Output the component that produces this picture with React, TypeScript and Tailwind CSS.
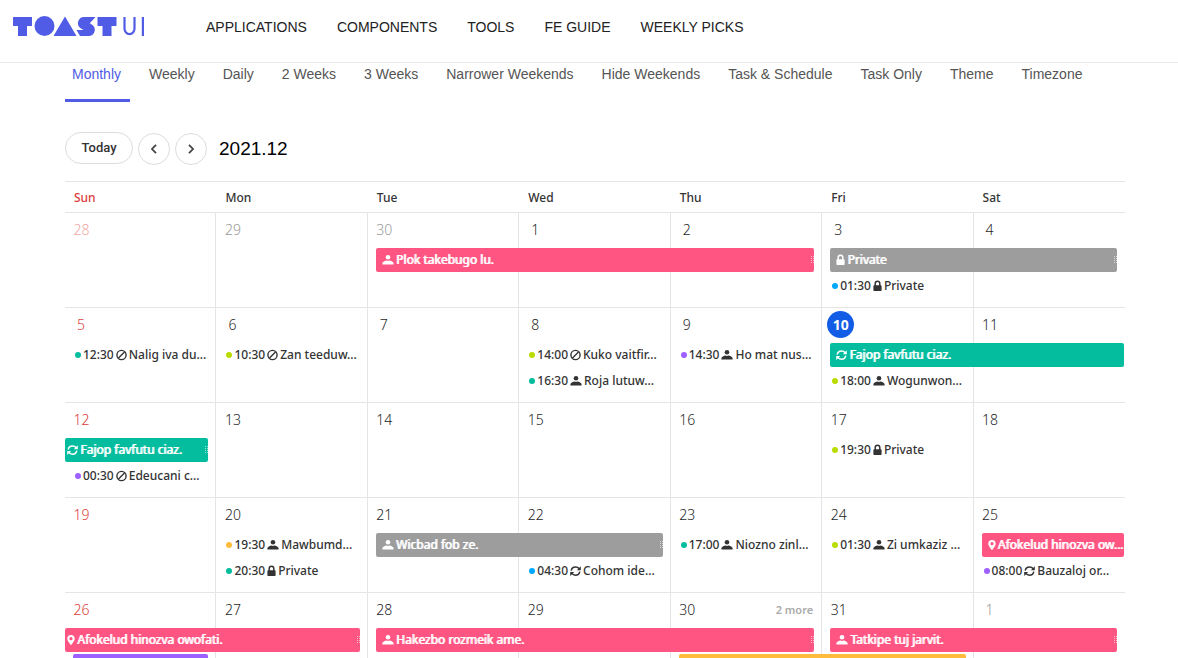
import React from 'react';

type Kind = 'user' | 'lock' | 'ban' | 'refresh' | 'pin';

interface Bar {
  title: string;
  icon?: Kind;
  color: string;
  place: string;
  start?: boolean;
  end?: boolean;
}

interface Timed {
  time: string;
  title: string;
  icon: Kind;
  dot: string;
  place: string;
}

interface Week {
  days: number[];
  bars: Bar[];
  timed: Timed[];
  more?: number;
}

const PINK = 'bg-[#ff5583]';
const GREEN = 'bg-[#03bd9e]';
const GREY = 'bg-[#9d9d9d]';

const weeks: Week[] = [
  {
    days: [28, 29, 30, 1, 2, 3, 4],
    bars: [
      { title: 'Plok takebugo lu.', icon: 'user', color: PINK, place: 'col-start-3 col-span-3 row-start-2', start: true, end: true },
      { title: 'Private', icon: 'lock', color: GREY, place: 'col-start-6 col-span-2 row-start-2', start: true, end: true },
    ],
    timed: [{ time: '01:30', title: 'Private', icon: 'lock', dot: 'bg-[#00a9ff]', place: 'col-start-6 row-start-3' }],
  },
  {
    days: [5, 6, 7, 8, 9, 10, 11],
    bars: [{ title: 'Fajop favfutu ciaz.', icon: 'refresh', color: GREEN, place: 'col-start-6 col-span-2 row-start-2', start: true }],
    timed: [
      { time: '12:30', title: 'Nalig iva du...', icon: 'ban', dot: 'bg-[#03bd9e]', place: 'col-start-1 row-start-2' },
      { time: '10:30', title: 'Zan teeduw...', icon: 'ban', dot: 'bg-[#bbdc00]', place: 'col-start-2 row-start-2' },
      { time: '14:00', title: 'Kuko vaitfir...', icon: 'ban', dot: 'bg-[#bbdc00]', place: 'col-start-4 row-start-2' },
      { time: '16:30', title: 'Roja lutuw...', icon: 'user', dot: 'bg-[#03bd9e]', place: 'col-start-4 row-start-3' },
      { time: '14:30', title: 'Ho mat nus...', icon: 'user', dot: 'bg-[#9e5fff]', place: 'col-start-5 row-start-2' },
      { time: '18:00', title: 'Wogunwon...', icon: 'user', dot: 'bg-[#bbdc00]', place: 'col-start-6 row-start-3' },
    ],
  },
  {
    days: [12, 13, 14, 15, 16, 17, 18],
    bars: [{ title: 'Fajop favfutu ciaz.', icon: 'refresh', color: GREEN, place: 'col-start-1 row-start-2', end: true }],
    timed: [
      { time: '00:30', title: 'Edeucani c...', icon: 'ban', dot: 'bg-[#9e5fff]', place: 'col-start-1 row-start-3' },
      { time: '19:30', title: 'Private', icon: 'lock', dot: 'bg-[#bbdc00]', place: 'col-start-6 row-start-2' },
    ],
  },
  {
    days: [19, 20, 21, 22, 23, 24, 25],
    bars: [
      { title: 'Wicbad fob ze.', icon: 'user', color: GREY, place: 'col-start-3 col-span-2 row-start-2', start: true, end: true },
      { title: 'Afokelud hinozva ow...', icon: 'pin', color: PINK, place: 'col-start-7 row-start-2', start: true },
    ],
    timed: [
      { time: '19:30', title: 'Mawbumd...', icon: 'user', dot: 'bg-[#ffbb3b]', place: 'col-start-2 row-start-2' },
      { time: '20:30', title: 'Private', icon: 'lock', dot: 'bg-[#03bd9e]', place: 'col-start-2 row-start-3' },
      { time: '04:30', title: 'Cohom ide...', icon: 'refresh', dot: 'bg-[#00a9ff]', place: 'col-start-4 row-start-3' },
      { time: '17:00', title: 'Niozno zinl...', icon: 'user', dot: 'bg-[#03bd9e]', place: 'col-start-5 row-start-2' },
      { time: '01:30', title: 'Zi umkaziz ...', icon: 'user', dot: 'bg-[#bbdc00]', place: 'col-start-6 row-start-2' },
      { time: '08:00', title: 'Bauzaloj or...', icon: 'refresh', dot: 'bg-[#9e5fff]', place: 'col-start-7 row-start-3' },
    ],
  },
  {
    days: [26, 27, 28, 29, 30, 31, 1],
    more: 4,
    bars: [
      { title: 'Afokelud hinozva owofati.', icon: 'pin', color: PINK, place: 'col-start-1 col-span-2 row-start-2', end: true },
      { title: 'Hakezbo rozmeik ame.', icon: 'user', color: PINK, place: 'col-start-3 col-span-3 row-start-2', start: true, end: true },
      { title: 'Tatkipe tuj jarvit.', icon: 'user', color: PINK, place: 'col-start-6 col-span-2 row-start-2', start: true, end: true },
      { title: '', color: 'bg-[#9e5fff]', place: 'col-start-1 row-start-3', start: true, end: true },
      { title: '', color: 'bg-[#ffbb3b]', place: 'col-start-5 col-span-2 row-start-3', start: true, end: true },
    ],
    timed: [],
  },
];

const columns = ['col-start-1', 'col-start-2', 'col-start-3', 'col-start-4', 'col-start-5', 'col-start-6', 'col-start-7'];
const dayNames = ['Sun', 'Mon', 'Tue', 'Wed', 'Thu', 'Fri', 'Sat'];
const menu = ['APPLICATIONS', 'COMPONENTS', 'TOOLS', 'FE GUIDE', 'WEEKLY PICKS'];
const tabs = ['Monthly', 'Weekly', 'Daily', '2 Weeks', '3 Weeks', 'Narrower Weekends', 'Hide Weekends', 'Task & Schedule', 'Task Only', 'Theme', 'Timezone'];

function Icon({ kind }: { kind: Kind }) {
  switch (kind) {
    case 'user':
      return (
        <svg viewBox="0 0 12 12" className="mr-0.5 h-3 w-3 shrink-0" fill="currentColor">
          <circle cx="6" cy="3.2" r="2.3" />
          <path d="M0.4 10.6V9.3C0.4 7.7 3 6.8 4.6 6.5L6 7.1L7.4 6.5C9 6.8 11.6 7.7 11.6 9.3V10.6Z" />
        </svg>
      );
    case 'lock':
      return (
        <svg viewBox="0 0 9 12" className="mr-0.5 h-3 w-[9px] shrink-0">
          <path d="M2.2 6V3.6a2.3 2.3 0 0 1 4.6 0V6" fill="none" stroke="currentColor" strokeWidth="1.5" />
          <rect x="0.4" y="5.2" width="8.2" height="5.8" rx="0.8" fill="currentColor" />
        </svg>
      );
    case 'ban':
      return (
        <svg viewBox="0 0 11 12" className="mr-0.5 h-3 w-[11px] shrink-0" fill="none" stroke="currentColor" strokeWidth="1.4">
          <circle cx="5.5" cy="6" r="4.6" />
          <path d="M2.3 9.2L8.7 2.8" />
        </svg>
      );
    case 'refresh':
      return (
        <svg viewBox="0 0 11 12" className="mr-0.5 h-3 w-[11px] shrink-0" fill="none" stroke="currentColor" strokeWidth="1.5">
          <path d="M1.2 5.6C1.6 3.4 3.4 2 5.6 2C7.1 2 8.4 2.7 9.2 3.8" />
          <path d="M9.8 6.6C9.4 8.8 7.6 10.2 5.4 10.2C3.9 10.2 2.6 9.5 1.8 8.4" />
          <path d="M10.8 1.2V5.2H6.8Z M0.2 11V7H4.2Z" fill="currentColor" stroke="none" />
        </svg>
      );
    case 'pin':
      return (
        <svg viewBox="0 0 8 12" className="mr-0.5 h-3 w-2 shrink-0" fill="currentColor">
          <path fillRule="evenodd" d="M4 1A3.7 3.7 0 0 0 0.3 4.7C0.3 7.2 4 11 4 11S7.7 7.2 7.7 4.7A3.7 3.7 0 0 0 4 1ZM4 3.1A1.6 1.6 0 1 1 4 6.3A1.6 1.6 0 0 1 4 3.1Z" />
        </svg>
      );
  }
}

function Logo() {
  return (
    <svg viewBox="0 0 132 20" className="h-5 w-[132px]" fill="#515ce6" role="img" aria-label="TOAST UI">
      <path d="M0 1H19V10H14V20H5V10H0Z" />
      <circle cx="31.5" cy="10" r="10" />
      <path d="M52 0.5L63.5 20H40.5Z" />
      <path d="M82.5 1H71A6.2 6.2 0 0 0 67.2 12L70.5 14H63.5L67 20H75.5A6.2 6.2 0 0 0 79.5 9L76.8 7.2Z" />
      <path d="M84.5 1H103.5V10H98.5V20H89.5V10H84.5Z" />
      <path d="M111.5 1V12.5A5 5.6 0 0 0 121.5 12.5V1" fill="none" stroke="#515ce6" strokeWidth="2.2" />
      <path d="M128.8 1H131V20H128.8Z" />
    </svg>
  );
}

function Grip() {
  return (
    <svg viewBox="0 0 3 8" className="ml-auto h-2 w-[3px] shrink-0" fill="none" stroke="#ffffff" strokeOpacity="0.6" strokeDasharray="1 1">
      <path d="M0.5 0V8M2.5 0V8" />
    </svg>
  );
}

function WeekRow({ week, index }: { week: Week; index: number }) {
  return (
    <div className="-mb-px grid grid-cols-7 grid-rows-[35px_26px_26px_8px] border-t border-[#e5e5e5]">
      {week.days.map((day, i) => {
        const other = (index === 0 && day > 20) || (index === 4 && day < 7);
        const today = index === 1 && day === 10;
        const tone = i === 0 ? (other ? 'text-[#f0a8a8]' : 'text-[#dc3c3c]') : other ? 'text-[#999999]' : 'text-[#1f1f1f]';
        return (
          <div key={i} className={`${columns[i]} row-start-1 row-span-4 flex items-start justify-between border-[#e5e5e5] pt-[3px] pl-[5px] pr-2 ${i < 6 ? 'border-r' : ''}`}>
            {today ? (
              <span className="flex h-[27px] w-[27px] items-center justify-center rounded-full bg-[#135de6] text-sm font-bold text-white">{day}</span>
            ) : (
              <span className={`flex h-7 min-w-[22px] items-center justify-center text-sm font-light ${day > 9 ? 'pl-px' : ''} ${tone}`}>{day}</span>
            )}
            {week.more === i && <button className="h-7 text-[11px] font-semibold text-[#aaaaaa]">2 more</button>}
          </div>
        );
      })}
      {week.bars.map((bar, i) => (
        <div
          key={i}
          className={`${bar.place} ${bar.color} z-10 flex h-6 min-w-0 items-center rounded-xs text-xs font-normal text-white ${bar.start ? 'ml-2 pl-1.5' : 'pl-0.5'} ${bar.end ? 'mr-2' : 'mr-px'}`}
        >
          {bar.icon && <Icon kind={bar.icon} />}
          <span className="whitespace-nowrap [text-shadow:1px_0_0_currentColor]">{bar.title}</span>
          {bar.end && bar.icon && <Grip />}
        </div>
      ))}
      {week.timed.map((item, i) => (
        <div key={i} className={`${item.place} ml-2 flex h-6 min-w-0 items-center pl-0.5 text-xs font-medium text-[#333333]`}>
          <span className={`mr-0.5 h-1.5 w-1.5 shrink-0 rounded-full ${item.dot}`} />
          <span className="mr-0.5 shrink-0">{item.time}</span>
          <Icon kind={item.icon} />
          <span className="whitespace-nowrap">{item.title}</span>
        </div>
      ))}
    </div>
  );
}

export default function App() {
  return (
    <div className="h-screen overflow-hidden bg-white font-['Liberation_Sans',Arial,sans-serif]">
      <header className="flex h-[63px] items-start border-b border-[#ebebeb] pl-[13px]">
        <a href="#home" className="mt-4">
          <Logo />
        </a>
        <nav className="ml-[61px] flex gap-[30px] pt-[17px] text-sm text-[#222222]">
          {menu.map((label) => (
            <a key={label} href="#menu">{label}</a>
          ))}
        </nav>
      </header>

      <main className="pl-[65px] pr-[53px]">
        <nav className="flex h-[39px] text-sm text-[#555555]">
          {tabs.map((label, i) => (
            <a key={label} href="#tab" className={`whitespace-nowrap pt-px ${i === 0 ? 'mr-[19px] border-b-3 border-[#515ce6] pr-[9px] pl-[7px] text-[#515ce6]' : 'mr-[28px]'}`}>
              {label}
            </a>
          ))}
        </nav>

        <div className="mt-[30px] flex h-[33px] items-end gap-[5px]">
          <button className="h-8 w-[68px] self-start rounded-full border border-[#dddddd] font-['Roboto',sans-serif] text-[13px] font-medium text-[#333333]">Today</button>
          <button aria-label="Previous" className="flex h-8 w-8 items-center justify-center rounded-full border border-[#dddddd]">
            <svg viewBox="0 0 8 10" className="h-2.5 w-2" fill="none" stroke="#444444" strokeWidth="1.8"><path d="M6 0.8L2 5L6 9.2" /></svg>
          </button>
          <button aria-label="Next" className="flex h-8 w-8 items-center justify-center rounded-full border border-[#dddddd]">
            <svg viewBox="0 0 8 10" className="h-2.5 w-2" fill="none" stroke="#444444" strokeWidth="1.8"><path d="M2 0.8L6 5L2 9.2" /></svg>
          </button>
          <h1 className="pl-[7px] text-[19px] leading-8 text-black">2021.12</h1>
        </div>

        <section className="mt-4 font-['Noto_Sans',sans-serif]">
          <div className="grid h-[31px] grid-cols-7 items-center border-t border-[#e5e5e5] pt-0.5 text-xs font-medium text-[#333333]">
            {dayNames.map((name, i) => (
              <div key={name} className={`pl-[9px] ${i === 0 ? 'text-[#dc3c3c]' : ''}`}>{name}</div>
            ))}
          </div>
          {weeks.map((week, i) => (
            <WeekRow key={i} week={week} index={i} />
          ))}
        </section>
      </main>
    </div>
  );
}
